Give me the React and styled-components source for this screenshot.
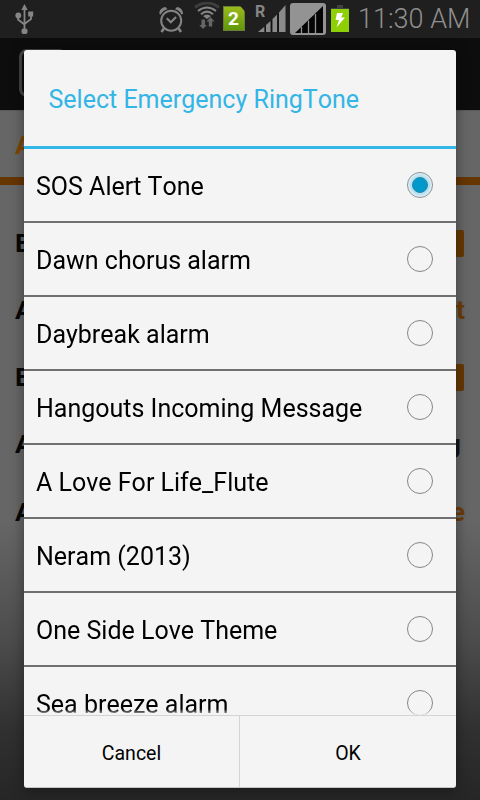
import React, { useState } from "react";
import styled, { createGlobalStyle } from "styled-components";

const tones = [
  "SOS Alert Tone",
  "Dawn chorus alarm",
  "Daybreak alarm",
  "Hangouts Incoming Message",
  "A Love For Life_Flute",
  "Neram (2013)",
  "One Side Love Theme",
  "Sea breeze alarm",
];

const UsbIcon = () => (
  <svg width="20" height="32" viewBox="0 0 20 32" fill="none" stroke="#858585">
    <path d="M9.5 28V5M3 13v3.5l6.5 5M16 13v3l-6.5 5" strokeWidth="1.8" />
    <path d="M9.5 1l3.2 6h-6.400zM13.2 8.500h5v5h-5z" fill="#858585" stroke="none" />
    <circle cx="3.3" cy="12.5" r="2.9" fill="#858585" stroke="none" />
    <rect x="6.5" y="25.5" width="6" height="5.5" rx="2" fill="#858585" stroke="none" />
  </svg>
);

const AlarmIcon = () => (
  <svg width="24" height="26" viewBox="0 0 24 26" fill="none" stroke="#848484">
    <circle cx="12.2" cy="13.7" r="10" strokeWidth="2" />
    <path d="M7.8 11.200l4 4 5.3-5.2" strokeWidth="2.2" />
    <path d="M4.8 21.5L2.5 25M19.7 21.5L22 25" strokeWidth="2.6" />
    <path
      d="M.5 7C0 4 2 .5 6.500 0l2 2.300C5 3 3 5 1.800 7.500zM24 7c.3-3-2-6.500-6-7l-2 2.300c3 .7 5 2.500 6.500 5.200z"
      fill="#848484"
      stroke="none"
    />
  </svg>
);

const WifiIcon = () => (
  <svg width="26" height="28" viewBox="0 0 26 28" fill="none">
    <path d="M1 5.500Q13-3.500 25 5.500" stroke="#3d3d3d" strokeWidth="3" />
    <path d="M4 9Q13 2 22 9" stroke="#858585" strokeWidth="2" />
    <path d="M7 12.200Q13 7 19 12.200" stroke="#858585" strokeWidth="2" />
    <path d="M9 14q4-3 8 0l-4 3z" fill="#858585" />
    <path
      d="M7.500 17.500h3.500v5.500H13l-4 4-3.800-4h2.300zM14.800 24.500v-5H12.500l4-4.500 4 4.500h-2.300v5z"
      fill="#666"
    />
  </svg>
);

const SignalIcon = () => (
  <svg width="28" height="27" viewBox="0 0 28 27" fill="#8a8a8a">
    <path d="M0 27L6.500 21.500V27z" />
    <path d="M8 20L12.500 16v11H8zM14.500 14L19 9.500V27h-4.500zM21 7.500L27.500 0v27H21z" />
    <path d="M7.200 21v6M13.500 15.500V27M20 9v18" stroke="#111" strokeWidth="1" />
  </svg>
);

const SecondSignalIcon = () => (
  <svg width="36" height="32" viewBox="0 0 36 32">
    <rect width="36" height="32" rx="3" fill="#939393" />
    <path d="M5 30L33 3v27z" fill="#050505" />
    <path d="M11.500 24v6M18.500 17.500V30M25.500 11v19" stroke="#939393" strokeWidth="1.300" />
  </svg>
);

const BatteryIcon = () => (
  <svg width="18" height="27" viewBox="0 0 18 27">
    <path d="M6 0h6v3h6v2H0V3h6z" fill="#404040" />
    <path d="M0 4h18v23H0z" fill="#8fcf05" />
    <path d="M6 8h6l-1.800 4.500H14L5.500 22.500l2.500-7.500H4.500z" fill="#fff" />
  </svg>
);

const App = () => {
  const [selected, setSelected] = useState(0);

  return (
    <>
      <GlobalStyle />
      <Screen>
        <StatusBar>
          <Slot left="15" top="3">
            <UsbIcon />
          </Slot>
          <Slot left="124" top="7">
            <AlarmIcon />
          </Slot>
          <Slot left="11" top="2">
            <WifiIcon />
          </Slot>
          <Sim>2</Sim>
          <Roaming>R</Roaming>
          <Signal>
            <SignalIcon />
          </Signal>
          <Slot left="4" top="3">
            <SecondSignalIcon />
          </Slot>
          <Slot left="5" top="5">
            <BatteryIcon />
          </Slot>
          <Clock>11:30 AM</Clock>
        </StatusBar>
        <AppBar>
          <AppIcon />
        </AppBar>
        <Page>
          <SectionTitle>A</SectionTitle>
          <Setting height="67">
            <Label>E</Label>
            <Switch />
          </Setting>
          <Setting height="67">
            <Label>A</Label>
            <Value>t</Value>
          </Setting>
          <Setting height="67">
            <Label>E</Label>
            <Switch />
          </Setting>
          <Setting height="68">
            <Label>A</Label>
            <Value dark>g</Value>
          </Setting>
          <Setting height="67">
            <Label>A</Label>
            <Value>e</Value>
          </Setting>
        </Page>
        <Dialog role="dialog">
          <Title>Select Emergency RingTone</Title>
          <List role="radiogroup">
            {tones.map((tone, i) => (
              <Row
                key={tone}
                role="radio"
                aria-checked={selected === i}
                onClick={() => setSelected(i)}
              >
                <ToneName>{tone}</ToneName>
                <Radio>{selected === i && <Dot />}</Radio>
              </Row>
            ))}
          </List>
          <Actions>
            <Action width="215">Cancel</Action>
            <Action width="217">OK</Action>
          </Actions>
        </Dialog>
      </Screen>
    </>
  );
};

export default App;

const GlobalStyle = createGlobalStyle`
  body {
    margin: 0;
    background: #262626;
    font-family: Roboto, "Liberation Sans", sans-serif;
    font-kerning: none;
  }
  * {
    box-sizing: border-box;
  }
`;

const Screen = styled.div`
  position: relative;
  display: flex;
  flex-direction: column;
  width: 480px;
  height: 800px;
  overflow: hidden;
`;

const StatusBar = styled.div`
  display: flex;
  align-items: flex-start;
  flex: 0 0 38px;
  background: #1f1f1f;
`;

const Slot = styled.div`
  display: flex;
  flex: none;
  margin: ${({ left, top }) => `${top}px 0 0 ${left}px`};
`;

const Sim = styled.div`
  flex: none;
  width: 22px;
  height: 25px;
  margin: 6px 0 0 3px;
  padding-right: 1px;
  background: linear-gradient(#9aba1c, #5f980b);
  border: 1px solid #6d7d38;
  clip-path: polygon(0 0, 78% 0, 100% 22%, 100% 100%, 0 100%);
  color: #fff;
  font-size: 19px;
  font-weight: 700;
  line-height: 24px;
  text-align: center;
`;

const Roaming = styled.div`
  width: 12px;
  margin: 5px 0 0 10px;
  color: #868686;
  font-size: 16px;
  font-weight: 700;
  line-height: 14px;
`;

const Signal = styled.div`
  display: flex;
  flex: none;
  margin: 5px 0 0 -9px;
`;

const Clock = styled.div`
  margin: 4px 0 0 9px;
  color: #8f8f8f;
  font-size: 27px;
  font-weight: 300;
  line-height: 31px;
  white-space: nowrap;
`;

const AppBar = styled.div`
  flex: 0 0 72px;
  padding: 11px 0 0 19px;
  background: #0d0d0d;
`;

const AppIcon = styled.div`
  width: 48px;
  height: 48px;
  border: 3px solid #444;
  border-radius: 8px;
`;

const Page = styled.div`
  flex: 1;
  background: linear-gradient(#666 0, #666 410px, #4c4c4c 530px, #303030 620px, #262626 690px);
  border-top: 1px solid #5a5a5a;
`;

const SectionTitle = styled.div`
  height: 74px;
  margin-bottom: 25px;
  padding: 17px 15px 0;
  border-bottom: 8px solid #663600;
  color: #804600;
  font-size: 26.5px;
  font-weight: 700;
  line-height: 34px;
`;

const Setting = styled.div`
  display: flex;
  align-items: center;
  justify-content: space-between;
  height: ${({ height }) => height}px;
  padding: 0 15px;
`;

const Label = styled.div`
  padding-bottom: 3px;
  color: #080808;
  font-size: 26.5px;
  font-weight: 700;
`;

const Value = styled(Label)`
  margin-right: ${({ dark }) => (dark ? 4 : 0)}px;
  color: ${({ dark }) => (dark ? "#161616" : "#6b3c08")};
`;

const Switch = styled.div`
  width: 90px;
  height: 27px;
  margin-right: 1px;
  background: #663803;
  border-radius: 2px;
`;

const Dialog = styled.div`
  position: absolute;
  top: 50px;
  left: 24px;
  display: flex;
  flex-direction: column;
  width: 432px;
  height: 738px;
  overflow: hidden;
  background: #f4f4f4;
  border-bottom: 1px solid #c4c4c4;
  border-radius: 3px;
  box-shadow: 0 2px 14px rgba(0, 0, 0, 0.4);
`;

const Title = styled.div`
  flex: 0 0 99px;
  padding: 4px 0 0 24.5px;
  border-bottom: 3px solid #33b5e5;
  color: #33b5e5;
  font-size: 25px;
  line-height: 92px;
  white-space: nowrap;
`;

const List = styled.div`
  flex: 1;
  min-height: 0;
  overflow: hidden;
  mask-image: linear-gradient(#000 calc(100% - 6px), rgba(0, 0, 0, 0.2));
`;

const Row = styled.div`
  display: flex;
  align-items: center;
  justify-content: space-between;
  height: 74px;
  padding: 0 23px 0 12px;
  border-bottom: 2px solid #707070;
`;

const ToneName = styled.div`
  padding-top: 2px;
  color: #000;
  font-size: 25px;
  white-space: nowrap;
`;

const Radio = styled.div`
  display: flex;
  align-items: center;
  justify-content: center;
  flex: none;
  width: 26px;
  height: 26px;
  border: 1.400px solid #858585;
  border-radius: 50%;
`;

const Dot = styled.div`
  width: 16px;
  height: 16px;
  background: #0099cc;
  border: 1px solid #2d86a6;
  border-radius: 50%;
  box-shadow: 0 0 3px 3px #b4e0f0;
`;

const Actions = styled.div`
  display: flex;
  flex: 0 0 72px;
  border-top: 1px solid #d4d4d4;
`;

const Action = styled.button`
  width: ${({ width }) => width}px;
  padding: 4px 0 0;
  background: none;
  border: 0;
  color: #000;
  font-family: inherit;
  font-size: 19.5px;

  & + & {
    border-left: 1px solid #d4d4d4;
  }
`;
